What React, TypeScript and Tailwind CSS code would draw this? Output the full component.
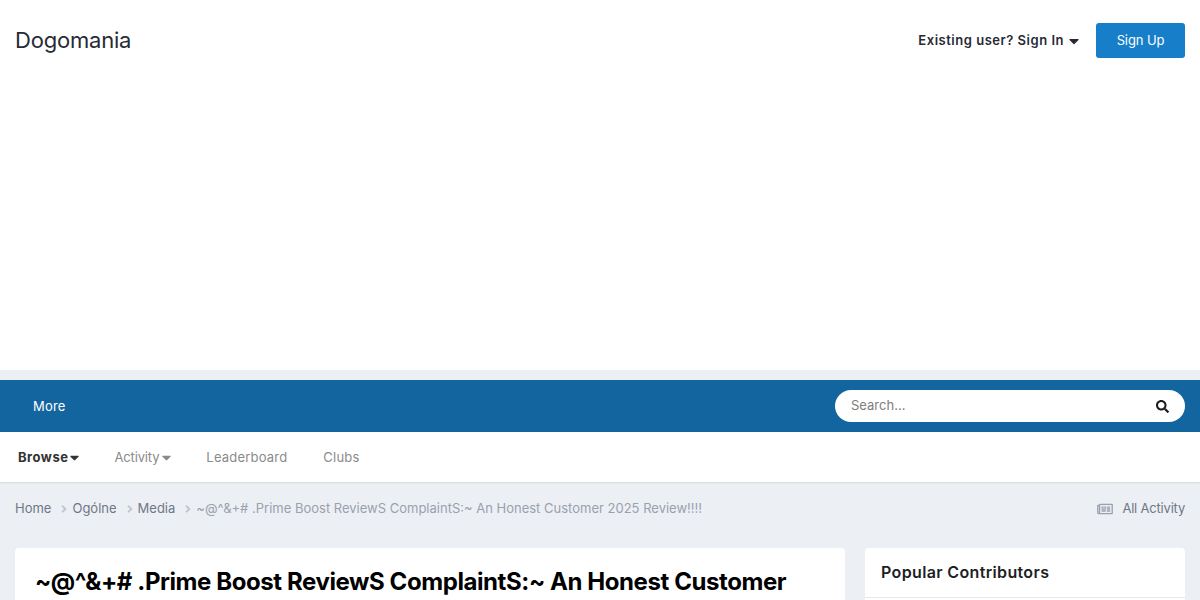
import { FaAngleRight, FaCaretDown, FaRegNewspaper, FaSearch } from 'react-icons/fa';

const crumbs = ['Home', 'Ogólne', 'Media'];

export default function App() {
  return (
    <div className="h-[600px] overflow-hidden bg-[#ecf0f5] font-['Inter',sans-serif]">
      {/* Header */}
      <header className="h-[370px] bg-white">
        <div className="flex h-[80px] items-center justify-between px-[15px]">
          <span className="text-[22px] tracking-[-0.2px] text-[#272a34]">Dogomania</span>
          <div className="flex items-center">
            <span className="flex items-center pt-[2px] text-[13px] font-semibold tracking-[0.52px] text-[#272a34]">
              Existing user? Sign In
              <FaCaretDown className="ml-[5px] h-[16px] w-[10px]" />
            </span>
            <button className="ml-[17px] h-[35px] w-[89px] rounded-[3px] bg-[#177ec9] pt-[1px] text-[13px] tracking-[-0.1px] text-white">Sign Up</button>
          </div>
        </div>
      </header>

      {/* Primary nav */}
      <nav className="mt-[10px] flex h-[52px] items-center justify-between bg-[#13659f] pr-[15px] pl-[33px]">
        <span className="pt-[2px] text-[13px] tracking-[0.2px] text-white">More</span>
        <div className="flex h-[32px] w-[350px] items-center justify-between rounded-full bg-white px-[16px]">
          <span className="text-[13px] text-[#7d7d7d]">Search...</span>
          <FaSearch className="h-[13px] w-[13px] text-[#1c1c1c]" />
        </div>
      </nav>

      {/* Secondary nav */}
      <div className="flex h-[50px] items-center bg-white pt-[2px] pl-[18px] text-[13px] tracking-[0.2px] text-[#8a8a8a] shadow-[0_1px_2px_rgba(0,0,0,0.1)]">
        <span className="flex items-center font-bold tracking-[0.5px] text-[#333333]">
          Browse
          <FaCaretDown className="mb-[1px] ml-[2px] h-[15px] w-[9px]" />
        </span>
        <span className="ml-[35px] flex items-center tracking-[-0.15px]">
          Activity
          <FaCaretDown className="mb-[1px] ml-[3px] h-[15px] w-[9px]" />
        </span>
        <span className="ml-[35px]">Leaderboard</span>
        <span className="ml-[36px]">Clubs</span>
      </div>

      {/* Breadcrumb */}
      <div className="flex h-[52px] items-center justify-between px-[15px] pt-[2px] text-[13px]">
        <div className="flex items-center text-[#6f7787]">
          {crumbs.map((c) => (
            <span key={c} className="flex items-center">
              {c}
              <FaAngleRight className="mr-[5px] ml-[10px] h-[14px] w-[6px] text-[#c0c5cf]" />
            </span>
          ))}
          <span className="text-[#9aa0ad]">~@^&amp;+# .Prime Boost ReviewS ComplaintS:~ An Honest Customer 2025 Review!!!!</span>
        </div>
        <div className="flex items-center text-[#6f7686]">
          <FaRegNewspaper className="mr-[9px] h-[14px] w-[16px] text-[#9aa0ad]" />
          <span className="tracking-[-0.2px]">All Activity</span>
        </div>
      </div>

      {/* Content */}
      <div className="mt-[14px] flex gap-[20px] px-[15px]">
        <main className="h-[200px] w-[830px] rounded-[4px] bg-white px-[21px] pt-[18px]">
          <h1 className="-ml-[1px] text-[24px] leading-[32px] font-bold tracking-[-0.42px] text-black">
            ~@^&amp;+# .Prime Boost ReviewS ComplaintS:~ An Honest Customer
          </h1>
        </main>
        <aside className="h-[200px] w-[320px] rounded-[4px] bg-white">
          <h3 className="border-b border-[#e8e8e8] px-[16px] pt-[14px] pb-[14px] text-[16px] leading-[21px] font-semibold tracking-[0.35px] text-[#1d1f25]">
            Popular Contributors
          </h3>
        </aside>
      </div>
    </div>
  );
}
